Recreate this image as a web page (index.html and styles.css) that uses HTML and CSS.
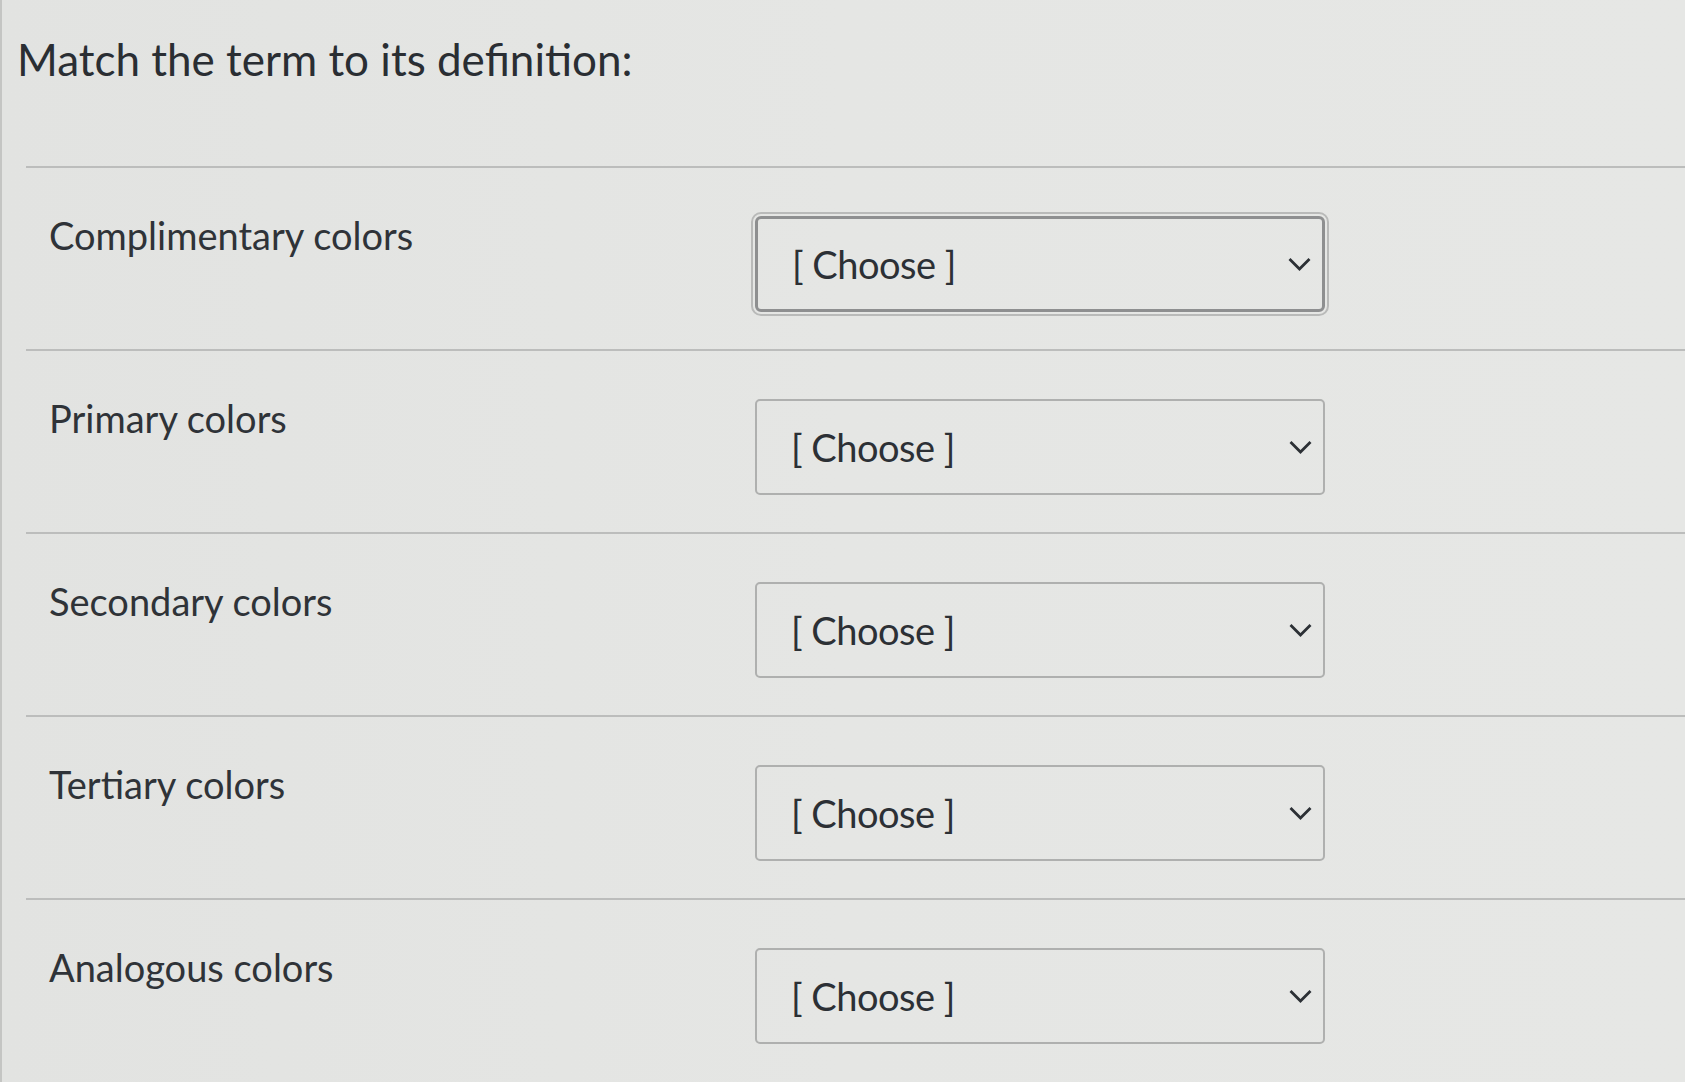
FILE: index.html
```html
<!DOCTYPE html>
<html lang="en">
<head>
<meta charset="utf-8">
<title>Match the term to its definition</title>
<link rel="stylesheet" href="styles.css">
</head>
<body>
<main class="quiz">
  <h1 class="question">Match the term to its definition:</h1>
  <div class="matches">
    <div class="match-row">
      <div class="term">Complimentary colors</div>
      <div class="select select--focused">
        <span class="select-value">[ Choose ]</span>
        <svg class="chevron" viewBox="0 0 24 15" aria-hidden="true"><path d="M2 2 L12 12 L22 2"/></svg>
      </div>
    </div>
    <div class="match-row">
      <div class="term">Primary colors</div>
      <div class="select">
        <span class="select-value">[ Choose ]</span>
        <svg class="chevron" viewBox="0 0 24 15" aria-hidden="true"><path d="M2 2 L12 12 L22 2"/></svg>
      </div>
    </div>
    <div class="match-row">
      <div class="term">Secondary colors</div>
      <div class="select">
        <span class="select-value">[ Choose ]</span>
        <svg class="chevron" viewBox="0 0 24 15" aria-hidden="true"><path d="M2 2 L12 12 L22 2"/></svg>
      </div>
    </div>
    <div class="match-row">
      <div class="term">Tertiary colors</div>
      <div class="select">
        <span class="select-value">[ Choose ]</span>
        <svg class="chevron" viewBox="0 0 24 15" aria-hidden="true"><path d="M2 2 L12 12 L22 2"/></svg>
      </div>
    </div>
    <div class="match-row">
      <div class="term">Analogous colors</div>
      <div class="select">
        <span class="select-value">[ Choose ]</span>
        <svg class="chevron" viewBox="0 0 24 15" aria-hidden="true"><path d="M2 2 L12 12 L22 2"/></svg>
      </div>
    </div>
  </div>
</main>
</body>
</html>
```
FILE: styles.css
```css
html, body {
  margin: 0;
  padding: 0;
}

body {
  background: linear-gradient(to right, #e2e3e1 0%, #e5e6e4 50%, #e6e7e5 100%);
  font-family: "Lato", "Noto Sans", sans-serif;
  color: #2c3035;
  width: 1685px;
  height: 1082px;
  overflow: hidden;
}

.quiz {
  height: 1082px;
  box-sizing: border-box;
  padding-top: 32px;
  border-left: 2px solid #c4c5c3;
}

.question {
  margin: 0 0 0 15px;
  font-size: 44px;
  font-weight: 400;
  line-height: 55px;
  color: #2a2e33;
}

.matches {
  margin-top: 79px;
}

.match-row {
  display: flex;
  align-items: flex-start;
  height: 181px;
  margin-left: 24px;
  padding-left: 23px;
  border-top: 2px solid #bcbdbc;
}

.term {
  flex: 0 0 706px;
  margin-top: 44px;
  font-size: 38px;
  line-height: 46px;
  color: #2f3338;
}

.select {
  display: flex;
  align-items: center;
  justify-content: space-between;
  box-sizing: border-box;
  width: 570px;
  height: 96px;
  margin-top: 48px;
  padding: 0 10px 0 34px;
  border: 2px solid #afb0af;
  border-radius: 5px;
  font-size: 38px;
  color: #2c3035;
}

.select--focused {
  border: 3px solid #8e8f90;
  outline: 2px solid #b9bab9;
  outline-offset: 2px;
  border-radius: 6px;
}

.select-value {
  line-height: 46px;
  letter-spacing: -0.5px;
}

.chevron {
  width: 25px;
  height: 15px;
  fill: none;
  stroke: #2c3035;
  stroke-width: 2.8;
}
```
